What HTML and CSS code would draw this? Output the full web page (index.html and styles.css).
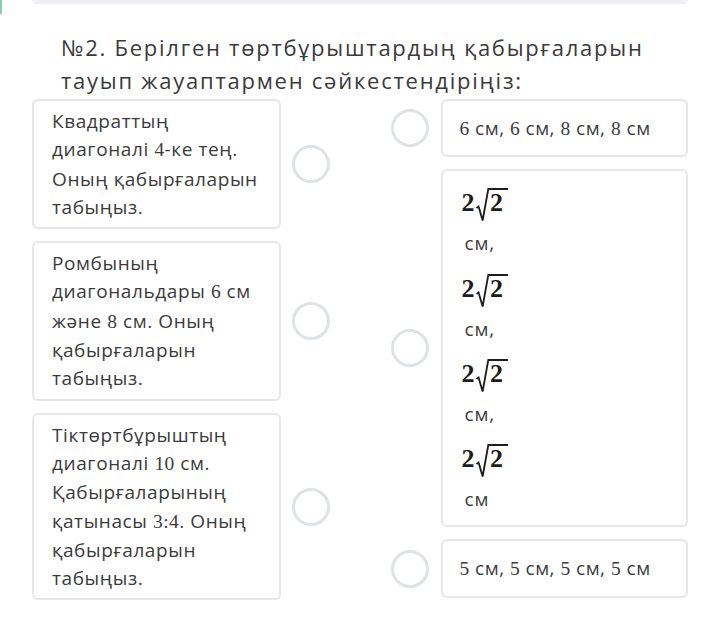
FILE: index.html
```html
<!DOCTYPE html>
<html lang="kk">
<head>
<meta charset="utf-8">
<title>№2</title>
<link rel="stylesheet" href="styles.css">
</head>
<body>
<div class="page">
  <div class="topbar">
    <div class="accent"></div>
    <div class="prev-card"></div>
  </div>
  <h1 class="question">№2. Берілген төртбұрыштардың қабырғаларын тауып жауаптармен сәйкестендіріңіз:</h1>
  <div class="board">
    <div class="col col-left">
      <div class="row">
        <div class="card card-left">Квадраттың диагоналі <span class="n">4</span>-ке тең. Оның қабырғаларын табыңыз.</div>
        <div class="dot"></div>
      </div>
      <div class="row">
        <div class="card card-left">Ромбының диагональдары <span class="n">6</span> см және <span class="n">8</span> см. Оның қабырғаларын табыңыз.</div>
        <div class="dot"></div>
      </div>
      <div class="row">
        <div class="card card-left">Тіктөртбұрыштың диагоналі <span class="n">10</span> см. Қабырғаларының қатынасы <span class="n">3:4</span>. Оның қабырғаларын табыңыз.</div>
        <div class="dot"></div>
      </div>
    </div>
    <div class="col col-right">
      <div class="row">
        <div class="dot"></div>
        <div class="card card-right"><span class="n">6</span> см, <span class="n">6</span> см, <span class="n">8</span> см, <span class="n">8</span> см</div>
      </div>
      <div class="row">
        <div class="dot"></div>
        <div class="card card-right card-math">
          <div class="unit">
            <div class="math"><span class="d">2</span><svg class="rad" viewBox="0 0 13 34" width="13" height="34"><path d="M0.5 20 L2.6 18.4 L6.6 32.5 L12.3 1 L13 1"/></svg><span class="rc">2</span></div>
            <div class="unit-text">см,</div>
          </div>
          <div class="unit">
            <div class="math"><span class="d">2</span><svg class="rad" viewBox="0 0 13 34" width="13" height="34"><path d="M0.5 20 L2.6 18.4 L6.6 32.5 L12.3 1 L13 1"/></svg><span class="rc">2</span></div>
            <div class="unit-text">см,</div>
          </div>
          <div class="unit">
            <div class="math"><span class="d">2</span><svg class="rad" viewBox="0 0 13 34" width="13" height="34"><path d="M0.5 20 L2.6 18.4 L6.6 32.5 L12.3 1 L13 1"/></svg><span class="rc">2</span></div>
            <div class="unit-text">см,</div>
          </div>
          <div class="unit">
            <div class="math"><span class="d">2</span><svg class="rad" viewBox="0 0 13 34" width="13" height="34"><path d="M0.5 20 L2.6 18.4 L6.6 32.5 L12.3 1 L13 1"/></svg><span class="rc">2</span></div>
            <div class="unit-text">см</div>
          </div>
        </div>
      </div>
      <div class="row">
        <div class="dot"></div>
        <div class="card card-right"><span class="n">5</span> см, <span class="n">5</span> см, <span class="n">5</span> см, <span class="n">5</span> см</div>
      </div>
    </div>
  </div>
</div>
</body>
</html>
```
FILE: styles.css
```css
* { box-sizing: border-box; }
html, body { margin: 0; padding: 0; background: #ffffff; }
body {
  font-family: "Open Sans", "Noto Sans", sans-serif;
  color: #3b3b3b;
}
.page {
  width: 720px;
  height: 619px;
  overflow: hidden;
}
.topbar {
  display: flex;
  align-items: flex-start;
  height: 14px;
}
.accent {
  width: 2px;
  height: 14px;
  background: #8fcfae;
}
.prev-card {
  margin-left: 30px;
  width: 656px;
  height: 4px;
  background: #eef0f3;
  border-radius: 0 0 6px 6px;
}
.question {
  margin: 17px 0 0 61px;
  font-size: 22px;
  font-weight: 400;
  line-height: 33px;
  letter-spacing: 1.75px;
  color: #3a3a3a;
  width: 615px;
}
.board {
  display: flex;
  justify-content: space-between;
  margin: 2px 32px 0 32px;
}
.col {
  display: flex;
  flex-direction: column;
  gap: 12px;
}
.col-left { width: 298px; }
.col-right { width: 297px; }
.row {
  display: flex;
  align-items: center;
  gap: 11px;
}
.col-right .row { gap: 11.5px; }
.card {
  border: 2px solid #e5e7e9;
  border-radius: 6px;
  background: #fff;
  font-size: 19px;
  line-height: 28.3px;
}
.card-left {
  width: 249px;
  padding: 6px 10px 6px 18px;
  letter-spacing: 0.6px;
}
.card-right {
  width: 248px;
  padding: 12.5px 10px 12.5px 17px;
  letter-spacing: 0.5px;
}
.n {
  font-family: "Liberation Serif", "Times New Roman", serif;
  font-size: 19.5px;
  letter-spacing: 0.4px;
}
.dot {
  flex: none;
  width: 38px;
  height: 38px;
  border: 3.5px solid #dfe3e6;
  border-radius: 50%;
}
.card-math {
  padding: 17px 12px 12px 19px;
  display: flex;
  flex-direction: column;
  gap: 16px;
}
.unit {
  display: flex;
  flex-direction: column;
  gap: 7px;
}
.math {
  display: flex;
  align-items: flex-start;
  height: 34px;
  font-family: "Liberation Serif", "Times New Roman", serif;
  font-size: 26px;
  font-weight: 700;
  line-height: 25px;
  letter-spacing: 0;
  color: #1c1c1c;
}
.math .d {
  margin-top: 2px;
  margin-right: 1.5px;
}
.rad {
  display: block;
  flex: none;
}
.rad path {
  fill: none;
  stroke: #1c1c1c;
  stroke-width: 1.8;
  stroke-linejoin: miter;
}
.rc {
  border-top: 2px solid #1c1c1c;
  padding: 0 5px 0 1.5px;
  margin-left: -0.5px;
}
.unit-text {
  padding-left: 3px;
  letter-spacing: 0.8px;
}
```
